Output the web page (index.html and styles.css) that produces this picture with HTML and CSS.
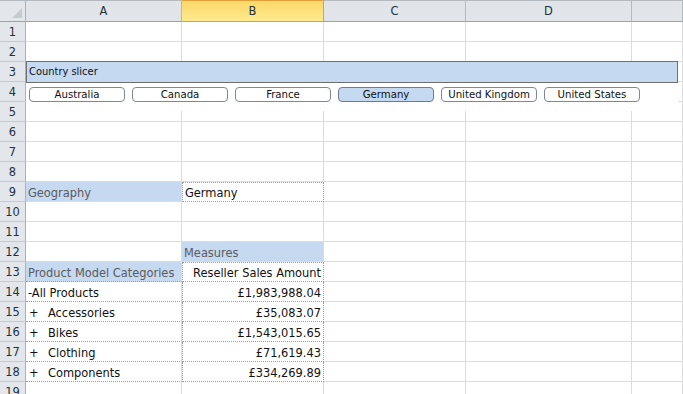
FILE: index.html
```html
<!DOCTYPE html>
<html lang="en">
<head>
    <meta charset="UTF-8">
    <title>Country slicer - pivot</title>
    <link rel="stylesheet" href="styles.css">
</head>
<body>
    <div class="sheet">
        <div class="grid">
            <!-- column headers -->
            <div class="corner"><span class="corner-tri"></span></div>
            <div class="ch">A</div>
            <div class="ch sel">B</div>
            <div class="ch">C</div>
            <div class="ch">D</div>
            <div class="ch"></div>

            <div class="rh">1</div><div class="c"></div><div class="c"></div><div class="c"></div><div class="c"></div><div class="c"></div>
            <div class="rh">2</div><div class="c"></div><div class="c"></div><div class="c"></div><div class="c"></div><div class="c"></div>
            <div class="rh">3</div><div class="c"></div><div class="c"></div><div class="c"></div><div class="c"></div><div class="c"></div>
            <div class="rh">4</div><div class="c"></div><div class="c"></div><div class="c"></div><div class="c"></div><div class="c"></div>
            <div class="rh">5</div><div class="c"></div><div class="c"></div><div class="c"></div><div class="c"></div><div class="c"></div>
            <div class="rh">6</div><div class="c"></div><div class="c"></div><div class="c"></div><div class="c"></div><div class="c"></div>
            <div class="rh">7</div><div class="c"></div><div class="c"></div><div class="c"></div><div class="c"></div><div class="c"></div>
            <div class="rh">8</div><div class="c"></div><div class="c"></div><div class="c"></div><div class="c"></div><div class="c"></div>

            <div class="rh">9</div>
            <div class="c blue lbl">Geography</div>
            <div class="c dot dot-top">Germany</div>
            <div class="c"></div><div class="c"></div><div class="c"></div>

            <div class="rh">10</div><div class="c"></div><div class="c"></div><div class="c"></div><div class="c"></div><div class="c"></div>
            <div class="rh">11</div><div class="c"></div><div class="c"></div><div class="c"></div><div class="c"></div><div class="c"></div>

            <div class="rh">12</div>
            <div class="c"></div>
            <div class="c blue lbl">Measures</div>
            <div class="c"></div><div class="c"></div><div class="c"></div>

            <div class="rh">13</div>
            <div class="c blue lbl row-line">Product Model Categories</div>
            <div class="c dot dot-top num">Reseller Sales Amount</div>
            <div class="c"></div><div class="c"></div><div class="c"></div>

            <div class="rh">14</div>
            <div class="c row-line">-All Products</div>
            <div class="c dot num">£1,983,988.04</div>
            <div class="c"></div><div class="c"></div><div class="c"></div>

            <div class="rh">15</div>
            <div class="c row-line"><span class="exp">+</span>Accessories</div>
            <div class="c dot num">£35,083.07</div>
            <div class="c"></div><div class="c"></div><div class="c"></div>

            <div class="rh">16</div>
            <div class="c row-line"><span class="exp">+</span>Bikes</div>
            <div class="c dot num">£1,543,015.65</div>
            <div class="c"></div><div class="c"></div><div class="c"></div>

            <div class="rh">17</div>
            <div class="c row-line"><span class="exp">+</span>Clothing</div>
            <div class="c dot num">£71,619.43</div>
            <div class="c"></div><div class="c"></div><div class="c"></div>

            <div class="rh">18</div>
            <div class="c row-line"><span class="exp">+</span>Components</div>
            <div class="c dot num">£334,269.89</div>
            <div class="c"></div><div class="c"></div><div class="c"></div>

            <div class="rh">19</div><div class="c"></div><div class="c"></div><div class="c"></div><div class="c"></div><div class="c"></div>
        </div>

        <!-- slicer floats over rows 3-5 -->
        <div class="slicer">
            <div class="slicer-head">Country slicer</div>
            <div class="slicer-items">
                <div class="slicer-btn">Australia</div>
                <div class="slicer-btn">Canada</div>
                <div class="slicer-btn">France</div>
                <div class="slicer-btn on">Germany</div>
                <div class="slicer-btn">United Kingdom</div>
                <div class="slicer-btn">United States</div>
            </div>
        </div>
    </div>
</body>
</html>
```

FILE: styles.css
```css
* {
    margin: 0;
    padding: 0;
    box-sizing: border-box;
}

body {
    font-family: 'DejaVu Sans Condensed', 'DejaVu Sans', sans-serif;
    background: #ffffff;
    width: 683px;
    height: 394px;
    overflow: hidden;
}

.sheet {
    position: relative;
    width: 683px;
    height: 394px;
    overflow: hidden;
}

.grid {
    display: grid;
    grid-template-columns: 26px 156px 142px 142px 166px 1fr;
    grid-template-rows: 22px;
    grid-auto-rows: 20px;
}

/* headers */
.corner {
    position: relative;
    background: #e3e6ea;
    border-top: 1px solid #b5bac1;
    border-right: 1px solid #a9b0b8;
    border-bottom: 1px solid #9aa2ab;
}

.corner-tri {
    position: absolute;
    right: 3px;
    bottom: 3px;
    width: 0;
    height: 0;
    border-left: 10px solid transparent;
    border-bottom: 10px solid #c6cbd1;
}

.ch {
    background: #e1e4e9;
    border-top: 1px solid #b5bac1;
    border-right: 1px solid #b4bac2;
    border-bottom: 1px solid #9aa2ab;
    color: #26303b;
    font-size: 12.7px;
    text-align: center;
    line-height: 20px;
}

.ch.sel {
    background: linear-gradient(#fbd867, #ffe98e);
    border: 1px solid #e1a03b;
    border-left: none;
}

.rh {
    background: #e3e6ea;
    border-right: 1px solid #a9b0b8;
    border-bottom: 1px solid #c5cad0;
    color: #26303b;
    font-size: 12.7px;
    text-align: center;
    line-height: 20px;
}

/* cells */
.c {
    border-right: 1px solid #dadcdd;
    border-bottom: 1px solid #dadcdd;
    font-size: 12.7px;
    line-height: 19px;
    padding: 1px 2px 0;
    color: #111111;
    white-space: nowrap;
}

.blue {
    background: #c5d9f1;
}

.lbl {
    color: #5b5b5b;
}

.num {
    text-align: right;
}

.dot {
    border-left: 1px dotted #a0a0a0;
    border-right: 1px dotted #a0a0a0;
    border-bottom: 1px dotted #a0a0a0;
}

.dot-top {
    border-top: 1px dotted #a0a0a0;
    padding-top: 0;
}

.row-line {
    border-bottom: 1px dotted #a0a0a0;
}

.exp {
    display: inline-block;
    width: 20px;
    padding-left: 1px;
}

/* slicer */
.slicer {
    position: absolute;
    left: 26px;
    top: 61px;
    width: 652px;
    height: 50px;
    background: #ffffff;
}

.slicer-head {
    height: 22px;
    background: #c5d9f1;
    border: 1px solid #6e6e6e;
    font-size: 11px;
    line-height: 19px;
    padding-left: 2px;
    color: #111111;
}

.slicer-items {
    display: flex;
    gap: 7px;
    padding: 4px 0 0 3px;
}

.slicer-btn {
    width: 96px;
    height: 15px;
    border: 1px solid #7d8894;
    border-radius: 4px;
    background: #ffffff;
    font-size: 11.3px;
    line-height: 13px;
    text-align: center;
    color: #111111;
}

.slicer-btn.on {
    background: #c5d9f1;
    border-color: #6f7b88;
}
```
